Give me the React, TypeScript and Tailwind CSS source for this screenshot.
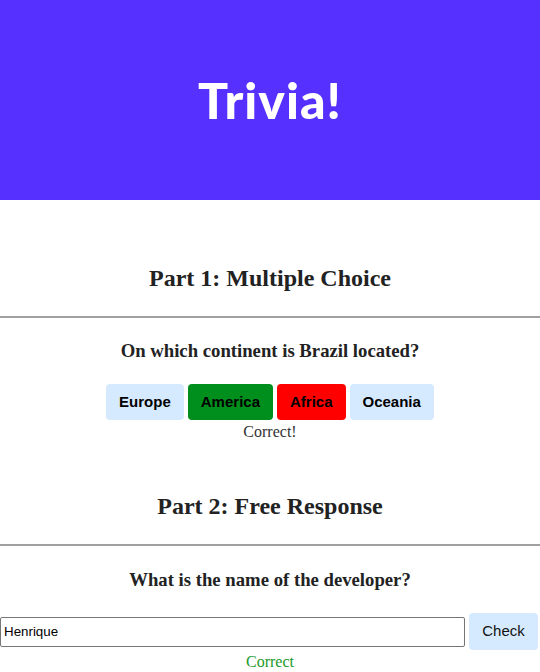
import React, { useState } from 'react';

const choices = [
    { label: 'Europe', bg: 'bg-[#d6eaff]' },
    { label: 'America', bg: 'bg-[#008f1c]' },
    { label: 'Africa', bg: 'bg-[#ff0000]' },
    { label: 'Oceania', bg: 'bg-[#d6eaff]' },
];

const SectionTitle: React.FC<{ title: string; top: string }> = ({ title, top }) => (
    <>
        <h2 className={`${top} text-center text-[24px] leading-[28px] font-bold text-[#222]`}>{title}</h2>
        <div className="mt-[24px] border-t-[2px] border-t-[#a0a0a0]" />
    </>
);

const App: React.FC = () => {
    const [answer, setAnswer] = useState('Henrique');

    return (
        <div className="w-[540px] bg-white font-['Liberation_Serif',serif] text-[#222]">
            <header className="h-[200px] flex items-center justify-center bg-[#5530ff]">
                <h1 className="font-['Lato',sans-serif] text-[50px] leading-[60px] font-black text-white tracking-[1px]">Trivia!</h1>
            </header>

            <SectionTitle title="Part 1: Multiple Choice" top="mt-[64px]" />
            <h3 className="mt-[22px] text-center text-[18.72px] leading-[22px] font-bold">On which continent is Brazil located?</h3>
            <div className="mt-[22px] flex justify-center gap-[4px]">
                {choices.map((c) => (
                    <button
                        key={c.label}
                        className={`${c.bg} h-[36px] px-[13px] rounded-[4px] font-['Liberation_Sans',sans-serif] text-[15px] font-bold text-black`}
                    >
                        {c.label}
                    </button>
                ))}
            </div>
            <p className="mt-[3px] text-center text-[16px] leading-[18px] text-[#333]">Correct!</p>

            <SectionTitle title="Part 2: Free Response" top="mt-[51px]" />
            <h3 className="mt-[23px] text-center text-[18.72px] leading-[22px] font-bold">What is the name of the developer?</h3>
            <div className="mt-[22px] flex items-center">
                <input
                    value={answer}
                    onChange={(e) => setAnswer(e.target.value)}
                    className="w-[465px] h-[30px] border border-[#767676] rounded-[2px] px-[3px] font-['Liberation_Sans',sans-serif] text-[13.33px] text-black"
                />
                <button className="ml-[4px] h-[37px] w-[69px] rounded-[4px] bg-[#d6eaff] font-['Liberation_Sans',sans-serif] text-[15px] text-[#111]">
                    Check
                </button>
            </div>
            <p className="mt-[3px] text-center text-[16px] leading-[18px] text-[#1a9a2a]">Correct</p>
        </div>
    );
};

export default App;
